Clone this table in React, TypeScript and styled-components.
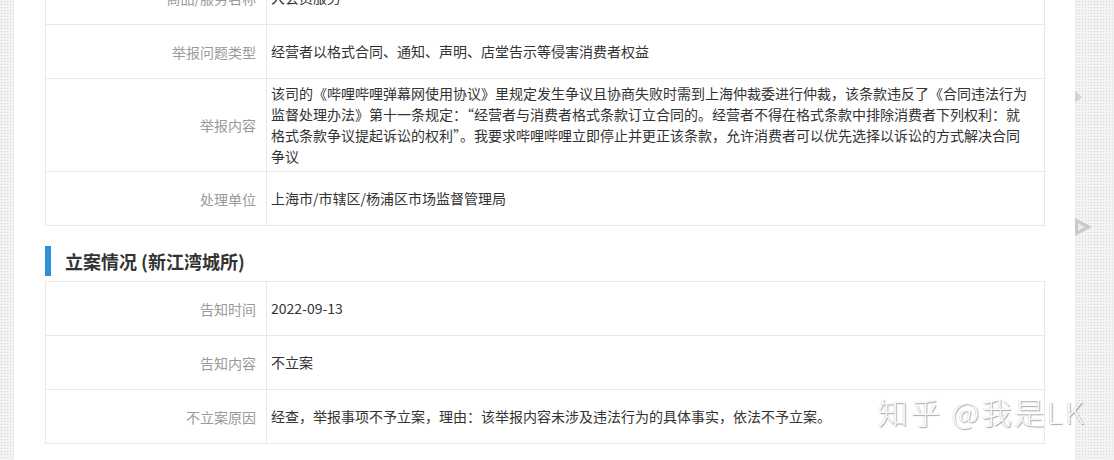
import React from "react";
import styled, { createGlobalStyle } from "styled-components";

const Global = createGlobalStyle`
  html, body { margin: 0; padding: 0; }
  body {
    width: 1114px;
    height: 460px;
    overflow: hidden;
    background: #fff;
    font-family: "Noto Sans CJK SC", "Microsoft YaHei", sans-serif;
  }
`;

const Page = styled.div`
  position: relative;
  display: flex;
  width: 1114px;
  height: 460px;
  overflow: hidden;
`;

const DottedStrip = styled.div<{ $w: number }>`
  position: relative;
  flex: 0 0 ${(p) => p.$w}px;
  background-color: #f3f3f3;
  background-image: radial-gradient(#d6d6d6 0.8px, transparent 0.9px);
  background-size: 3px 3px;
`;

const Main = styled.main`
  flex: 1;
  background: #fff;
  padding: 0 30px 0 31px;
`;

const Table = styled.div<{ $first?: boolean }>`
  border: 1px solid #e8e8e8;
  border-bottom: none;
  margin-top: ${(p) => (p.$first ? "-30px" : "0")};
`;

const Row = styled.div`
  display: grid;
  grid-template-columns: 221px 1fr;
  border-bottom: 1px solid #e8e8e8;
  min-height: 53px;
`;

const Label = styled.div`
  display: flex;
  align-items: center;
  justify-content: flex-end;
  padding-right: 10px;
  border-right: 1px solid #e8e8e8;
  color: #9a9a9a;
  font-size: 14px;
`;

const Value = styled.div<{ $fw?: boolean }>`
  display: flex;
  align-items: center;
  padding: 4px 12px 4px 4px;
  color: #333;
  font-size: 14px;
  line-height: 21px;
  font-feature-settings: ${(p) => (p.$fw ? '"fwid" 1' : "normal")};
`;

const Title = styled.h3`
  margin: 20px 0 5px 0;
  height: 30px;
  display: flex;
  align-items: center;
  border-left: 6px solid #2f8fd4;
  padding-left: 14px;
  font-size: 18px;
  font-weight: bold;
  color: #333;
`;

const Arrow = styled.svg<{ $top: number }>`
  position: absolute;
  left: 0;
  top: ${(p) => p.$top}px;
`;

const Watermark = styled.div`
  position: absolute;
  right: 28px;
  top: 389px;
  font-size: 30px;
  font-weight: 300;
  letter-spacing: 2.5px;
  color: rgba(255, 255, 255, 0.95);
  text-shadow: 1px 1px 1px rgba(0, 0, 0, 0.35), -1px 0 0 rgba(0, 0, 0, 0.12);
  white-space: pre;
  pointer-events: none;
`;

type R = { label: string; value: string; fw?: boolean };

const rows1: R[] = [
  { label: "商品/服务名称", value: "大会员服务" },
  { label: "举报问题类型", value: "经营者以格式合同、通知、声明、店堂告示等侵害消费者权益" },
  {
    label: "举报内容",
    value:
      "该司的《哔哩哔哩弹幕网使用协议》里规定发生争议且协商失败时需到上海仲裁委进行仲裁，该条款违反了《合同违法行为监督处理办法》第十一条规定：“经营者与消费者格式条款订立合同的。经营者不得在格式条款中排除消费者下列权利：就格式条款争议提起诉讼的权利”。我要求哔哩哔哩立即停止并更正该条款，允许消费者可以优先选择以诉讼的方式解决合同争议",
    fw: true,
  },
  { label: "处理单位", value: "上海市/市辖区/杨浦区市场监督管理局" },
];

const rows2: R[] = [
  { label: "告知时间", value: "2022-09-13" },
  { label: "告知内容", value: "不立案" },
  { label: "不立案原因", value: "经查，举报事项不予立案，理由：该举报内容未涉及违法行为的具体事实，依法不予立案。" },
];

export default function App() {
  return (
    <>
      <Global />
      <Page>
        <DottedStrip $w={14} />
        <Main>
          <Table $first>
            {rows1.map((r) => (
              <Row key={r.label}>
                <Label>{r.label}</Label>
                <Value $fw={r.fw}>{r.value}</Value>
              </Row>
            ))}
          </Table>
          <Title>立案情况 (新江湾城所)</Title>
          <Table>
            {rows2.map((r) => (
              <Row key={r.label}>
                <Label>{r.label}</Label>
                <Value $fw={r.fw}>{r.value}</Value>
              </Row>
            ))}
          </Table>
        </Main>
        <DottedStrip $w={39}>
          <Arrow $top={91} width="8" height="12" viewBox="0 0 8 12">
            <polygon points="0,0 7,6 0,12" fill="#d4d4d4" />
          </Arrow>
          <Arrow $top={218} width="18" height="18" viewBox="0 0 18 18">
            <polygon points="0,0 17,9 0,18" fill="#c9c9c9" />
            <polygon points="3,5 10,9 3,13" fill="#e9e9e9" />
          </Arrow>
        </DottedStrip>
        <Watermark>知乎 @我是LK</Watermark>
      </Page>
    </>
  );
}
